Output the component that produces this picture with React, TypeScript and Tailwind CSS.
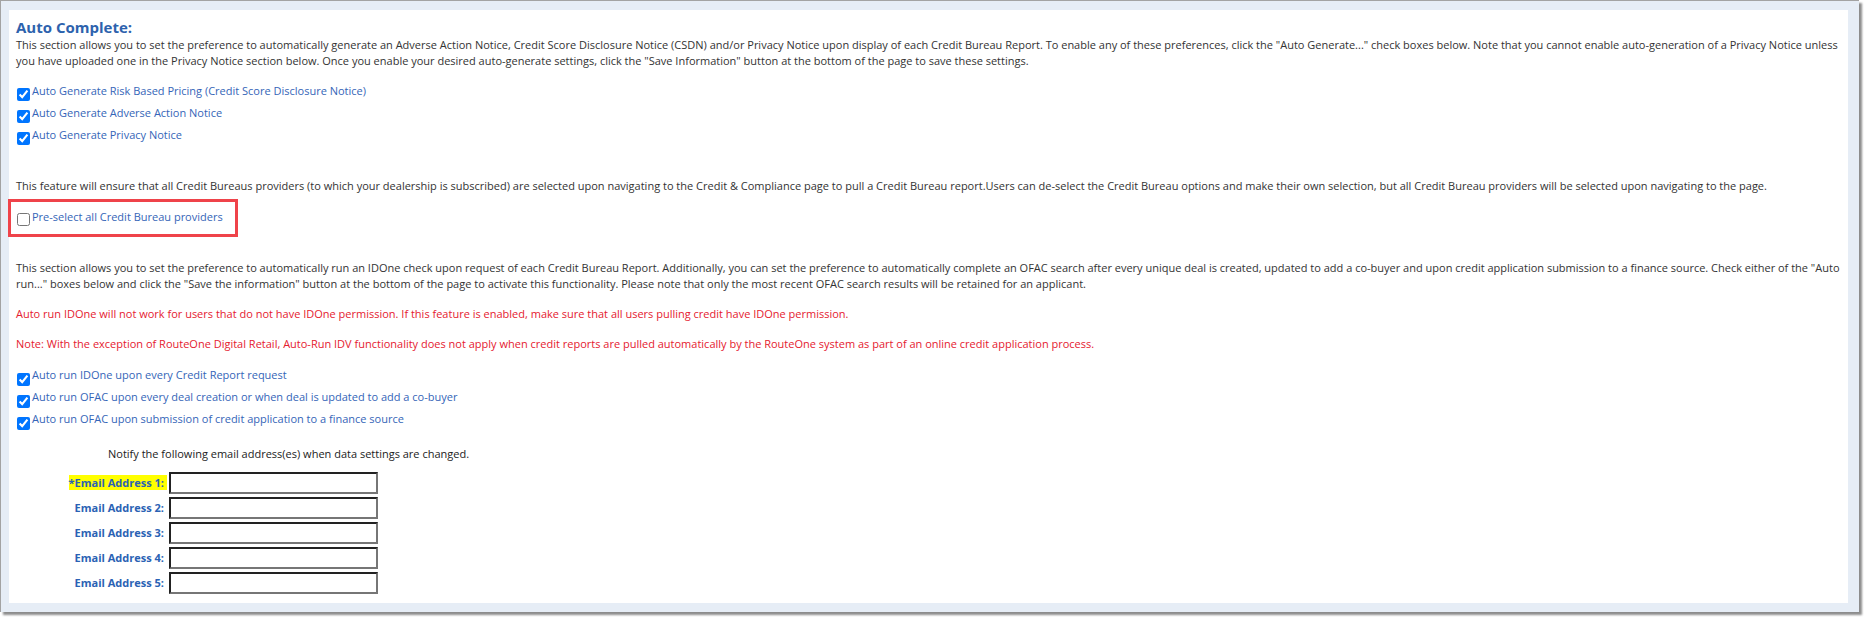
import React from "react";

const autoGenerate = [
  "Auto Generate Risk Based Pricing (Credit Score Disclosure Notice)",
  "Auto Generate Adverse Action Notice",
  "Auto Generate Privacy Notice",
];

const autoRun = [
  "Auto run IDOne upon every Credit Report request",
  "Auto run OFAC upon every deal creation or when deal is updated to add a co-buyer",
  "Auto run OFAC upon submission of credit application to a finance source",
];

function CheckRow({ label, id, offset }: { label: string; id: string; offset: string }) {
  return (
    <div className="flex h-[22px]">
      <input id={id} type="checkbox" defaultChecked className={`${offset} ml-px h-[13px] w-[13px] shrink-0`} />
      <label htmlFor={id} className="ml-[2px] whitespace-nowrap leading-4 text-[#3565b8]">
        {label}
      </label>
    </div>
  );
}

export default function App() {
  return (
    <div className="w-[1867px] h-[620px] bg-white" style={{ fontFamily: '"Open Sans", "Noto Sans", sans-serif' }}>
      <div className="w-[1859px] h-[612px] border-t border-l border-[#a3a3a3] bg-[#e6edf6] pt-[9px] pl-[8px] pr-[11px] pb-[9px] shadow-[3px_3px_2px_rgba(0,0,0,0.45)]">
        <div className="h-full bg-white pt-[7px] pl-[7px] text-[11px] text-[#333]">
          <h2 className="text-[15px] leading-[20px] font-bold text-[#2d62ad]">Auto Complete:</h2>
          <p className="leading-4 whitespace-nowrap">
            This section allows you to set the preference to automatically generate an Adverse Action Notice, Credit Score Disclosure Notice (CSDN) and/or Privacy Notice upon display of each Credit Bureau Report. To enable any of these preferences, click the "Auto Generate..." check boxes below. Note that you cannot enable auto-generation of a Privacy Notice unless
            <br />
            you have uploaded one in the Privacy Notice section below. Once you enable your desired auto-generate settings, click the "Save Information" button at the bottom of the page to save these settings.
          </p>

          <div className="mt-[14px]">
            {autoGenerate.map((l, i) => (
              <CheckRow key={l} id={`ag${i}`} label={l} offset="mt-[5px]" />
            ))}
          </div>

          <p className="mt-[29px] leading-4 whitespace-nowrap">
            This feature will ensure that all Credit Bureaus providers (to which your dealership is subscribed) are selected upon navigating to the Credit &amp; Compliance page to pull a Credit Bureau report.Users can de-select the Credit Bureau options and make their own selection, but all Credit Bureau providers will be selected upon navigating to the page.
          </p>

          <div className="-ml-[8px] mt-[5px] flex h-[38px] w-[230px] border-[3px] border-[#ef434a] pl-[6px] pt-[7px]">
            <input id="preselect" type="checkbox" className="mt-[4px] h-[13px] w-[13px] shrink-0" />
            <label htmlFor="preselect" className="ml-[2px] whitespace-nowrap leading-4 text-[#3565b8]">
              Pre-select all Credit Bureau providers
            </label>
          </div>

          <p className="mt-[23px] leading-4 whitespace-nowrap">
            This section allows you to set the preference to automatically run an IDOne check upon request of each Credit Bureau Report. Additionally, you can set the preference to automatically complete an OFAC search after every unique deal is created, updated to add a co-buyer and upon credit application submission to a finance source. Check either of the "Auto
            <br />
            run..." boxes below and click the "Save the information" button at the bottom of the page to activate this functionality. Please note that only the most recent OFAC search results will be retained for an applicant.
          </p>

          <p className="mt-[14px] leading-4 whitespace-nowrap text-[#e5202f]">
            Auto run IDOne will not work for users that do not have IDOne permission. If this feature is enabled, make sure that all users pulling credit have IDOne permission.
          </p>
          <p className="mt-[14px] leading-4 whitespace-nowrap text-[#e5202f]">
            Note: With the exception of RouteOne Digital Retail, Auto-Run IDV functionality does not apply when credit reports are pulled automatically by the RouteOne system as part of an online credit application process.
          </p>

          <div className="mt-[15px]">
            {autoRun.map((l, i) => (
              <CheckRow key={l} id={`ar${i}`} label={l} offset="mt-[6px]" />
            ))}
          </div>

          <p className="mt-[13px] ml-[92px] leading-4 text-[#222]">
            Notify the following email address(es) when data settings are changed.
          </p>

          <div className="mt-[10px] flex flex-col gap-[3px]">
            {[1, 2, 3, 4, 5].map((n) => (
              <div key={n} className="flex items-center">
                <div className="w-[151px] text-right">
                  <span className={`inline-block pr-[3px] leading-[15px] font-bold text-[#2a62b4] ${n === 1 ? "bg-[#ffff00]" : ""}`}>
                    {n === 1 ? "*" : ""}Email Address {n}:
                  </span>
                </div>
                <input
                  type="text"
                  className="ml-[2px] h-[22px] w-[209px] border-2 border-t-[#222] border-l-[#222] border-r-[#767676] border-b-[#767676] bg-white outline-none"
                />
              </div>
            ))}
          </div>
        </div>
      </div>
    </div>
  );
}
